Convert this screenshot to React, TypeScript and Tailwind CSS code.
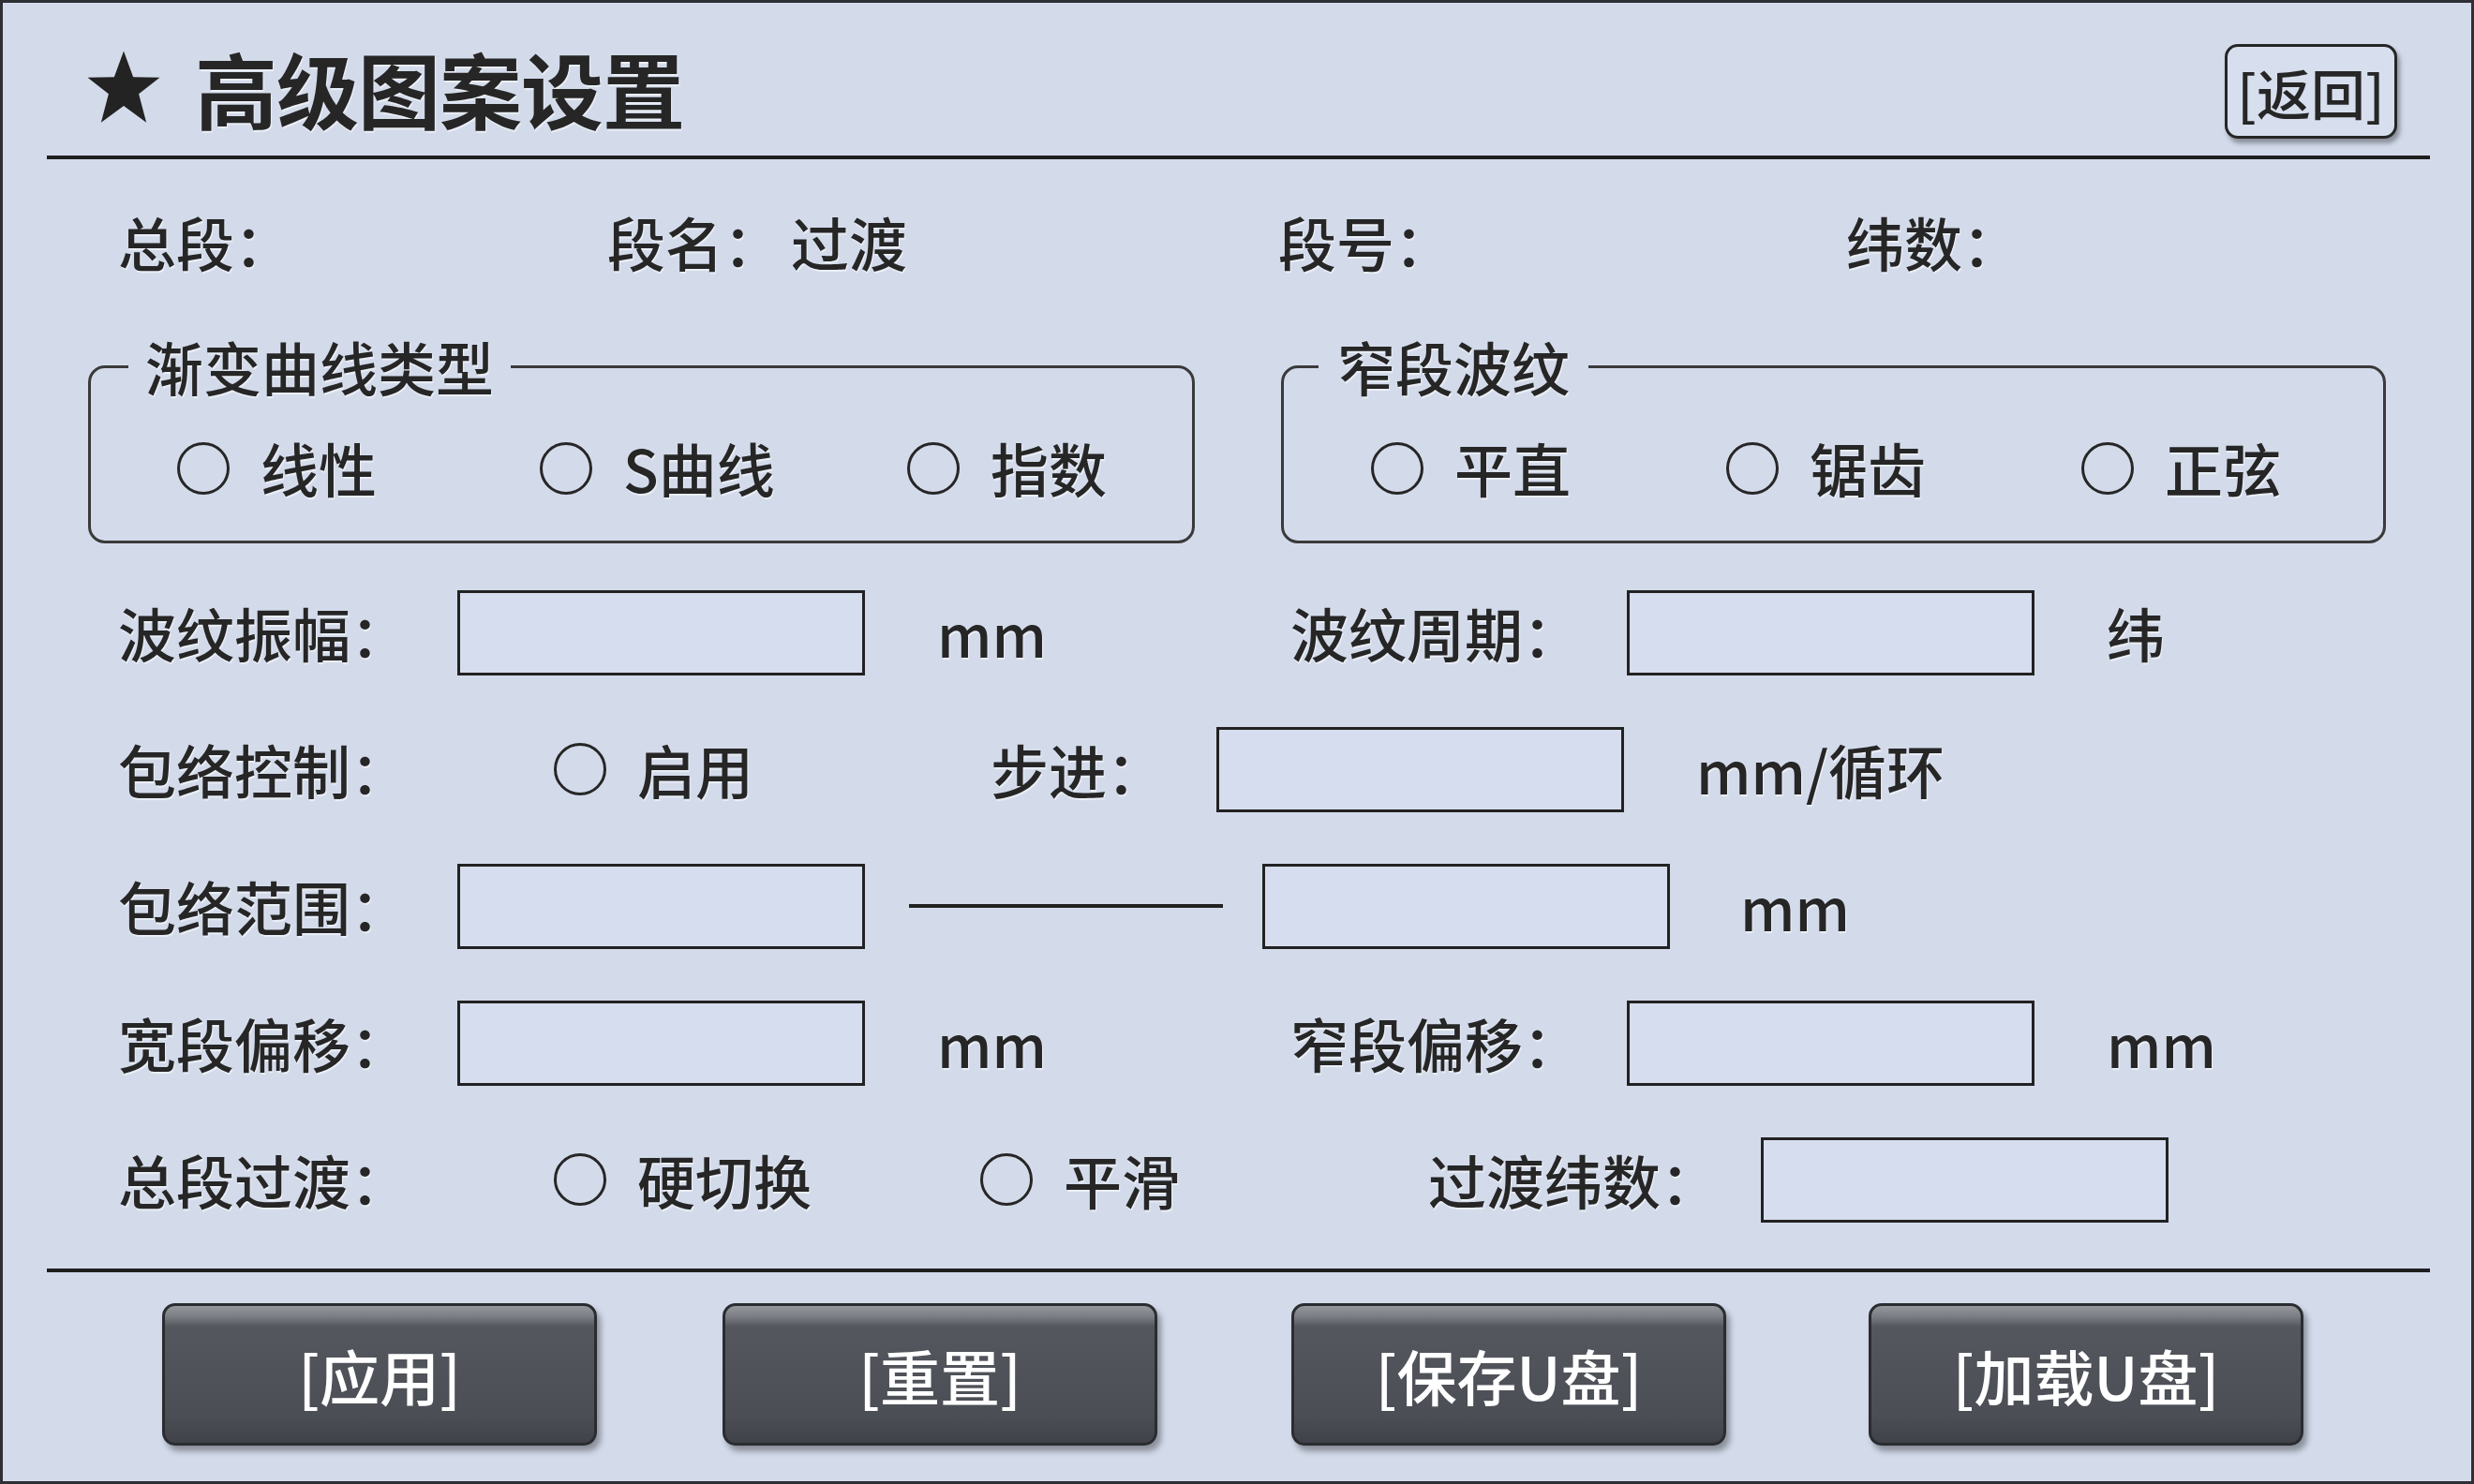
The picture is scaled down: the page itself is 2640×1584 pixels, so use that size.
import React from "react";

const font = "font-['Noto_Sans_CJK_SC','Noto_Sans',sans-serif]";

function Radio({ label }: { label: string }) {
  return (
    <div className="flex items-center">
      <span className="w-[56px] h-[56px] shrink-0 rounded-full border-[3px] border-[#262626]" />
      <span className="ml-[33px]">{label}</span>
    </div>
  );
}

function Box() {
  return <div className="w-[435px] h-[91px] shrink-0 border-[3px] border-[#222222] bg-[#d6ddee]" />;
}

function ActionButton({ label, className = "" }: { label: string; className?: string }) {
  return (
    <button
      className={`${className} w-[464px] h-[152px] shrink-0 rounded-[14px] border-[3px] border-[#2a2c30] bg-[linear-gradient(to_bottom,#95989d_0%,#797c82_8%,#54575e_15%,#4b4e55_80%,#3f4248_100%)] shadow-[4px_6px_6px_rgba(0,0,0,0.35)] text-white text-[64px] font-medium`}
    >
      {label}
    </button>
  );
}

export default function App() {
  return (
    <div
      className={`${font} w-[2640px] h-[1584px] overflow-hidden border-[3px] border-[#2d2f33] bg-[#d3dbeb] text-[#262626] text-[62px] font-medium flex flex-col [text-shadow:1px_2px_1px_rgba(255,255,255,0.55)]`}
    >
      {/* header */}
      <div className="ml-[47px] mr-[44px] pt-[44px] pb-[18px]">
        <div className="h-[101px] flex items-center justify-between pl-[40px] pr-[35px]">
          <div className="flex items-center mb-[10px]">
            <svg width="84" height="84" viewBox="0 0 24 24" className="shrink-0">
              <polygon
                points="12,1 14.9,8.9 23,9.1 16.6,14.1 18.9,22.8 12,17.7 5.1,22.8 7.4,14.1 1,9.1 9.1,8.9"
                fill="#232323"
              />
            </svg>
            <h1 className="ml-[34px] text-[88px] font-bold leading-none tracking-[-1px]">高级图案设置</h1>
          </div>
          <button className="w-[184px] h-[101px] rounded-[14px] border-[3px] border-[#262626] bg-[#d7dfee] shadow-[3px_5px_5px_rgba(0,0,0,0.35)] text-[58px] font-medium leading-none">
            [返回]
          </button>
        </div>
      </div>
      <div className="ml-[47px] mr-[44px] h-[4px] bg-[#1e1e1e]" />

      {/* info row */}
      <div className="h-[176px] flex items-center pl-[123px]">
        <div className="w-[522px] shrink-0">总段：</div>
        <div className="w-[716px] shrink-0">
          段名：<span className="ml-[10px]">过渡</span>
        </div>
        <div className="w-[606px] shrink-0">段号：</div>
        <div>纬数：</div>
      </div>

      {/* group boxes */}
      <div className="mt-[14px] flex">
        <fieldset className="ml-[91px] w-[1181px] border-[3px] border-[#3a3a3a] rounded-[18px]">
          <legend className="ml-[40px] px-[18px] leading-[62px]">渐变曲线类型</legend>
          <div className="h-[155px] flex items-center pl-[92px]">
            <div className="w-[387px] shrink-0">
              <Radio label="线性" />
            </div>
            <div className="w-[392px] shrink-0">
              <Radio label="S曲线" />
            </div>
            <Radio label="指数" />
          </div>
        </fieldset>
        <fieldset className="ml-[92px] w-[1179px] border-[3px] border-[#3a3a3a] rounded-[18px]">
          <legend className="ml-[37px] px-[20px] leading-[62px]">窄段波纹</legend>
          <div className="h-[155px] flex items-center pl-[93px]">
            <div className="w-[379px] shrink-0">
              <Radio label="平直" />
            </div>
            <div className="w-[379px] shrink-0">
              <Radio label="锯齿" />
            </div>
            <Radio label="正弦" />
          </div>
        </fieldset>
      </div>

      {/* parameter rows */}
      <div className="mt-[22px] flex flex-col pl-[123px]">
        <div className="h-[146px] flex items-center">
          <div className="w-[362px] shrink-0">波纹振幅：</div>
          <Box />
          <div className="ml-[77px] w-[377px] shrink-0">mm</div>
          <div className="w-[359px] shrink-0">波纹周期：</div>
          <Box />
          <div className="ml-[77px]">纬</div>
        </div>

        <div className="h-[146px] flex items-center">
          <div className="w-[465px] shrink-0">包络控制：</div>
          <div className="w-[466px] shrink-0">
            <Radio label="启用" />
          </div>
          <div className="w-[241px] shrink-0">步进：</div>
          <Box />
          <div className="ml-[77px]">mm/循环</div>
        </div>

        <div className="h-[146px] flex items-center">
          <div className="w-[362px] shrink-0">包络范围：</div>
          <Box />
          <div className="ml-[47px] w-[335px] h-[4px] shrink-0 bg-[#222222]" />
          <div className="ml-[42px]">
            <Box />
          </div>
          <div className="ml-[75px]">mm</div>
        </div>

        <div className="h-[146px] flex items-center">
          <div className="w-[362px] shrink-0">宽段偏移：</div>
          <Box />
          <div className="ml-[77px] w-[377px] shrink-0">mm</div>
          <div className="w-[359px] shrink-0">窄段偏移：</div>
          <Box />
          <div className="ml-[77px]">mm</div>
        </div>

        <div className="h-[146px] flex items-center">
          <div className="w-[465px] shrink-0">总段过渡：</div>
          <div className="w-[455px] shrink-0">
            <Radio label="硬切换" />
          </div>
          <div className="w-[478px] shrink-0">
            <Radio label="平滑" />
          </div>
          <div className="w-[355px] shrink-0">过渡纬数：</div>
          <Box />
        </div>
      </div>

      <div className="mt-[22px] ml-[47px] mr-[44px] h-[4px] bg-[#1e1e1e]" />

      {/* action buttons */}
      <div className="mt-[33px] pl-[170px] flex [text-shadow:none]">
        <ActionButton label="[应用]" />
        <ActionButton label="[重置]" className="ml-[134px]" />
        <ActionButton label="[保存U盘]" className="ml-[143px]" />
        <ActionButton label="[加载U盘]" className="ml-[152px]" />
      </div>
    </div>
  );
}
